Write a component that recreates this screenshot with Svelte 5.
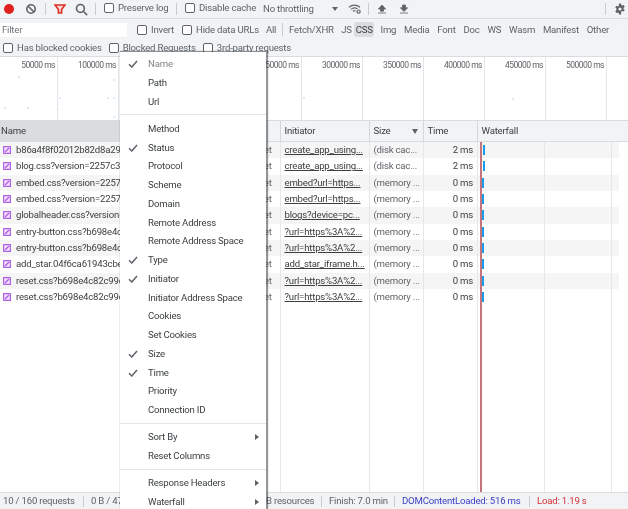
<script>
  const marks = [50000,100000,150000,200000,250000,300000,350000,400000,450000,500000];
  const dots = [[18,76],[57,108],[27,107],[4,107],[113,79],[113,116],[59,97],[107,97],[113,97],[303,97],[512,98]];
  const filters = ['All','Fetch/XHR','JS','CSS','Img','Media','Font','Doc','WS','Wasm','Manifest','Other'];
  const rows = [
    {n:'b86a4f8f02012b82d8a29a1b3c',i:'create_app_using...',s:'(disk cac...',t:'2 ms',b:2},
    {n:'blog.css?version=2257c3a1b2',i:'create_app_using...',s:'(disk cac...',t:'2 ms',b:2},
    {n:'embed.css?version=2257c3a1b2',i:'embed?url=https...',s:'(memory ...',t:'0 ms',b:0},
    {n:'embed.css?version=2257c3a1b2',i:'embed?url=https...',s:'(memory ...',t:'0 ms',b:0},
    {n:'globalheader.css?version=2257',i:'blogs?device=pc...',s:'(memory ...',t:'0 ms',b:0},
    {n:'entry-button.css?b698e4c82c99',i:'?url=https%3A%2...',s:'(memory ...',t:'0 ms',b:0},
    {n:'entry-button.css?b698e4c82c99',i:'?url=https%3A%2...',s:'(memory ...',t:'0 ms',b:0},
    {n:'add_star.04f6ca61943cbe4a1b2c',i:'add_star_iframe.h...',s:'(memory ...',t:'0 ms',b:0},
    {n:'reset.css?b698e4c82c99c4a1b2',i:'?url=https%3A%2...',s:'(memory ...',t:'0 ms',b:0},
    {n:'reset.css?b698e4c82c99c4a1b2',i:'?url=https%3A%2...',s:'(memory ...',t:'0 ms',b:0}
  ];
  const menu = [
    [{l:'Name',c:1,dim:1},{l:'Path'},{l:'Url'}],
    [{l:'Method'},{l:'Status',c:1},{l:'Protocol'},{l:'Scheme'},{l:'Domain'},{l:'Remote Address'},{l:'Remote Address Space'},{l:'Type',c:1},{l:'Initiator',c:1},{l:'Initiator Address Space'},{l:'Cookies'},{l:'Set Cookies'},{l:'Size',c:1},{l:'Time',c:1},{l:'Priority'},{l:'Connection ID'}],
    [{l:'Sort By',a:1},{l:'Reset Columns'}],
    [{l:'Response Headers',a:1},{l:'Waterfall',a:1}]
  ];
</script>

<div class="dt">
  <div class="bar top">
    <span class="rec"></span>
    <svg class="ic clear" viewBox="0 0 12 12"><circle cx="6" cy="6" r="4.2"/><path d="M3 3l6 6"/></svg>
    <i class="sep s1"></i>
    <svg class="ic funnel" viewBox="0 0 12 12"><path d="M1 2h10L7.600 6.400V10H4.400V6.400z"/></svg>
    <svg class="ic search" viewBox="0 0 12 12"><circle cx="5" cy="5" r="3.600"/><path d="M7.600 7.600l3.600 3.600"/></svg>
    <i class="sep s2"></i>
    <label class="chk l1"><b></b>Preserve log</label>
    <i class="sep s3"></i>
    <label class="chk l2"><b></b>Disable cache</label>
    <span class="throttle">No throttling</span>
    <span class="caret"></span>
    <svg class="ic wifi" viewBox="0 0 14 12"><path d="M1 4.200a8.400 8.400 0 0 1 11 0M3 6.400a5.500 5.500 0 0 1 6.400-.6M5 8.400a2.600 2.600 0 0 1 2.400-.6"/><circle cx="10.600" cy="8.600" r="1.600"/></svg>
    <i class="sep s4"></i>
    <svg class="ic arrow up" viewBox="0 0 10 10"><path d="M5 1L1.400 5H3.500v2.200h3V5h2.100zM1 9h8"/></svg>
    <svg class="ic arrow down" viewBox="0 0 10 10"><path d="M3.500 1h3v2.800h2.100L5 7.500 1.400 3.800h2.100zM1 9h8"/></svg>
    <i class="sep s5"></i>
    <svg class="ic gear" viewBox="0 0 12 12"><path d="M5 .6h2l.3 1.500 1 .5 1.400-.6 1 1.700-1.100 1 0 1.200 1.100 1-1 1.700-1.400-.6-1 .5L7 11.400H5l-.3-1.500-1-.5-1.400.6-1-1.700 1.100-1V5.500l-1.100-1 1-1.700 1.400.6 1-.5z"/><circle cx="6" cy="6" r="1.600" class="hole"/></svg>
  </div>

  <div class="bar second">
    <div class="filter">Filter</div>
    <label class="chk inv"><b></b>Invert</label>
    <label class="chk hide"><b></b>Hide data URLs</label>
    <div class="types">
      {#each filters as f, i}
        <span class:on={f === 'CSS'} class:first={i === 0} class:js={f === 'JS'}>{f}</span>
      {/each}
    </div>
  </div>

  <div class="bar third">
    <label class="chk"><b></b>Has blocked cookies</label>
    <label class="chk"><b></b>Blocked Requests</label>
    <label class="chk"><b></b>3rd-party requests</label>
  </div>

  <div class="overview">
    {#each marks as m}
      <div class="tick">{m} ms</div>
    {/each}
    {#each dots as d}
      <span class="dot" style="left:{d[0]}px;top:{d[1] - 57}px"></span>
    {/each}
  </div>

  <div class="table">
    <div class="row head">
      <div class="c name">Name</div>
      <div class="c type"></div>
      <div class="c init">Initiator</div>
      <div class="c size">Size<span class="sort"></span></div>
      <div class="c time">Time</div>
      <div class="c wf">Waterfall</div>
    </div>
    <div class="body">
      <div class="guides">
        <i style="left:280px"></i><i style="left:369px"></i><i style="left:423px"></i><i style="left:477px"></i><i style="left:544px"></i><i style="left:611px"></i>
        <i class="red"></i>
      </div>
      {#each rows as r}
        <div class="row item">
          <div class="c name">
            <svg class="file" viewBox="0 0 8 8"><rect x=".5" y=".5" width="7" height="7" rx=".6"/><path d="M2 6l4-4"/></svg>
            <span>{r.n}</span>
          </div>
          <div class="c type">stylesheet</div>
          <div class="c init"><u>{r.i}</u></div>
          <div class="c size">{r.s}</div>
          <div class="c time">{r.t}</div>
          <div class="c wf"><span class="bar-t" class:late={r.b}></span></div>
        </div>
      {/each}
    </div>
  </div>

  <div class="foot">
    <span class="a">10 / 160 requests</span><i></i>
    <span class="b">0 B / 47.2 kB</span><i></i>
    <span class="c2">1.8 MB / 4.8 MB resources</span><i></i>
    <span class="d">Finish: 7.0 min</span><i></i>
    <span class="e">DOMContentLoaded: 516 ms</span><i></i>
    <span class="f">Load: 1.19 s</span>
  </div>

  <div class="menu">
    {#each menu as g, gi}
      {#if gi}<hr />{/if}
      {#each g as m}
        <div class="mi" class:dim={m.dim}>
          {#if m.c}
            <svg class="tick-m" viewBox="0 0 10 8"><path d="M1 4.200l2.800 2.800L9 1"/></svg>
          {/if}
          {m.l}
          {#if m.a}<span class="tri"></span>{/if}
        </div>
      {/each}
    {/each}
  </div>
</div>

<style>
  :global(body) { margin: 0; background: #fff; }
  .dt {
    position: relative; width: 628px; height: 509px; overflow: hidden;
    font: 9.600px/1 Roboto, "Open Sans", sans-serif; letter-spacing: -.2px; color: #5f6368;
    display: flex; flex-direction: column; background: #fff;
    filter: blur(0.3px);
  }
  .bar { background: #f1f3f4; display: flex; align-items: center; flex: none; }
  .top { height: 18px; position: relative; border-bottom: 1px solid #dadce0; }
  .top > * { position: absolute; }
  .rec { left: 4px; top: 4px; width: 10px; height: 10px; border-radius: 50%; background: #e0201c; }
  .ic { fill: none; stroke: #5f6368; stroke-width: 1.500; }
  .clear { left: 25px; top: 3px; width: 12px; height: 12px; stroke-width: 1.600; }
  .funnel { left: 54px; top: 3px; width: 12px; height: 12px; stroke: #d93025; stroke-width: 1.600; fill: #f8d7d4; }
  .search { left: 75px; top: 3px; width: 13px; height: 13px; }
  .sep { width: 1px; height: 12px; background: #c8cbcf; top: 3px; }
  .s1 { left: 45px; } .s2 { left: 95px; } .s3 { left: 176px; } .s4 { left: 368px; } .s5 { left: 605px; }
  .chk { display: inline-flex; align-items: center; gap: 4px; white-space: nowrap; }
  .chk b { width: 8px; height: 8px; border: 1px solid #5f6368; border-radius: 2px; background: #fff; flex: none; }
  .l1 { left: 104px; top: 3px; }
  .l2 { left: 185px; top: 3px; }
  .throttle { left: 263px; top: 3px; white-space: nowrap; line-height: 12px; }
  .caret { left: 332px; top: 7px; border: 3px solid transparent; border-top: 4px solid #5f6368; border-bottom: 0; }
  .wifi { left: 348px; top: 3px; width: 14px; height: 12px; stroke-width: 1.200; }
  .arrow { width: 10px; height: 10px; top: 4px; fill: #5f6368; stroke-width: .8; }
  .up { left: 377px; } .down { left: 399px; }
  .gear { left: 614px; top: 3px; width: 12px; height: 12px; fill: #5f6368; stroke: none; }
  .gear .hole { fill: #f1f3f4; }

  .second { height: 19px; padding-top: 2px; box-sizing: border-box; }
  .filter { width: 127px; height: 14px; background: #fff; padding-left: 2px; box-sizing: border-box; line-height: 14px; color: #70757a; flex: none; }
  .inv { margin-left: 10px; }
  .hide { margin-left: 8px; }
  .types { display: flex; align-items: center; margin-left: 3px; }
  .types span { padding: 3px 3.900px; border-radius: 3px; white-space: nowrap; }
  .types .first { margin-right: 2px; padding: 2px 6px 2px 4px; border-right: 1px solid #c8cbcf; border-radius: 0; }
  .types .js { padding: 3px 0 3px 3.500px; }
  .types .on { background: #dadce0; color: #3c4043; padding: 3px 1.500px; margin: 0 2.400px; }

  .third { height: 19px; gap: 7px; padding: 1px 3px 0; border-bottom: 1px solid #dadce0; box-sizing: border-box; }

  .overview { height: 63px; position: relative; display: flex; flex: none; overflow: hidden; }
  .tick { width: 61px; flex: none; box-sizing: border-box; border-right: 1px solid #e3e5e8; text-align: right; padding: 4px 2px 0 0; font-size: 8.500px; letter-spacing: -.5px; white-space: nowrap; color: #5f6368; }
  .tick:first-child { width: 58px; }
  .dot { position: absolute; width: 2px; height: 2px; background: #dcecf7; }

  .table { flex: 1; display: flex; flex-direction: column; min-height: 0; }
  .row { display: grid; grid-template-columns: 221px 60px 89px 54px 54px 1fr; width: 619px; }
  .row .c { box-sizing: border-box; white-space: nowrap; overflow: hidden; padding: 0 3.500px; }
  .head { width: auto; height: 22px; background: #f1f3f4; border-top: 1px solid #dadce0; border-bottom: 1px solid #dadce0; box-sizing: border-box; align-items: stretch; }
  .head .c { line-height: 20px; border-right: 1px solid #d5d7da; color: #3c4043; position: relative; }
  .head .name { background: #dadce0; padding-left: 1px; }
  .head .wf { border-right: 0; }
  .sort { position: absolute; right: 5px; top: 8px; border: 3.500px solid transparent; border-top: 5px solid #5f6368; border-bottom: 0; }

  .body { position: relative; flex: 1; }
  .guides i { position: absolute; top: 0; bottom: 0; width: 1px; background: #e6e7e9; z-index: 1; }
  .guides i.red { left: 480px; width: 2px; background: #c4747c; z-index: 3; }
  .item { height: 16.330px; line-height: 16.330px; position: relative; }
  .item:nth-child(even) { background: #f5f5f5; }
  .row.item .name { padding-left: 0; display: flex; align-items: center; color: #3c4043; }
  .row.item .type { padding-left: 9px; }
  .file { width: 8px; height: 8px; margin: 0 5px 0 3px; flex: none; fill: #f3e5fd; stroke: #b05fe8; stroke-width: 1.400; }
  .item .init { color: #3c4043; }
  .item .size { color: #5f6368; }
  .row.item .time { text-align: right; color: #3c4043; padding-right: 5px; }
  .row.item .wf { position: relative; overflow: visible; padding: 0; }
  .bar-t { position: absolute; left: 4px; top: 3px; height: 10px; width: 2px; background: #1a9be8; z-index: 4; }
  .bar-t.late { left: 5px; }

  .foot { height: 17px; flex: none; box-sizing: border-box; background: #f1f3f4; border-top: 1px solid #dadce0; display: flex; align-items: center; padding-left: 3px; white-space: nowrap; position: relative; z-index: 2; }
  .foot i { width: 1px; height: 11px; background: #c8cbcf; margin: 0 7px; flex: none; }
  .foot span { flex: none; }
  .foot .a { width: 73px; }
  .foot .b { width: 100px; }
  .foot .c2 { width: 108px; text-align: right; }
  .foot .d { width: 58px; }
  .foot .e { width: 120px; color: #3a3fc4; }
  .foot .f { color: #d6303a; }

  .menu { position: absolute; left: 120px; top: 52px; width: 146px; height: 470px; background: #fff; box-shadow: 1px 0 1px 1px rgba(60,64,67,.55); padding-top: 3px; box-sizing: border-box; z-index: 5; color: #3c4043; }
  .mi { height: 18.750px; line-height: 18.750px; padding-left: 28px; position: relative; white-space: nowrap; }
  .mi.dim { color: #80868b; }
  .tick-m { position: absolute; left: 8px; top: 5px; width: 10px; height: 8px; fill: none; stroke: #5f6368; stroke-width: 1.500; }
  .tri { position: absolute; right: 7px; top: 6px; border: 3px solid transparent; border-left: 4px solid #5f6368; border-right: 0; }
  hr { border: 0; height: 1px; background: #e3e5e8; margin: 3px 0 4.500px; }
</style>
